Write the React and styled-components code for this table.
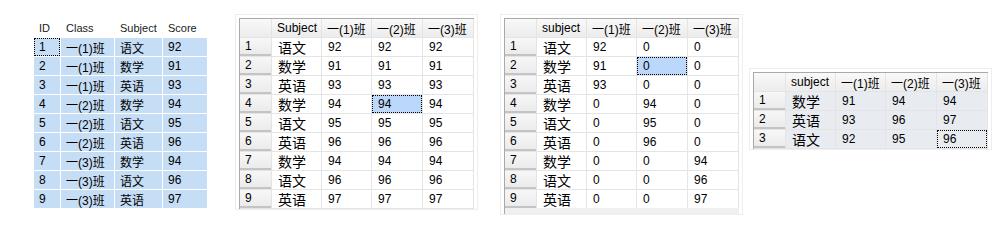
import React from "react"
import styled, { createGlobalStyle, css } from "styled-components"

const Global = createGlobalStyle`
  body {
    margin: 0;
    background: #ffffff;
    font-family: "Liberation Sans", "Noto Sans CJK SC", sans-serif;
    font-size: 12px;
    color: #000;
  }
`

const Page = styled.div`
  display: flex;
  align-items: flex-start;
  width: 1004px;
  height: 242px;
  padding: 14px 0 0 34px;
  box-sizing: border-box;
`

/* first table: all rows selected, light blue */
const SelGrid = styled.div`
  display: grid;
  grid-template-columns: 26px 53px 47px 44px;
  grid-template-rows: 19px;
  grid-auto-rows: 18px;
  row-gap: 1px;
  column-gap: 1px;
  margin-top: 4px;
  background: #ffffff;
`

const SelHead = styled.div`
  display: flex;
  align-items: center;
  padding-left: 5px;
  font-size: 11px;
  color: #1a1a1a;
`

const SelCell = styled.div`
  display: flex;
  align-items: center;
  padding-left: 5px;
  background: #c6ddf6;
  box-sizing: border-box;
  ${p => p.$focus && css`
    outline: 1px dotted #000;
    outline-offset: -1px;
  `}
`

/* result grids */
const Frame = styled.div`
  margin-left: ${p => p.$left}px;
  margin-top: ${p => p.$top || 0}px;
  padding: 3px 3px 0 3px;
  border: 1px solid #eeeeee;
  background: #ffffff;
`

const Grid = styled.div`
  display: grid;
  grid-template-columns: 31px 49px 49px 50px 50px;
  grid-auto-rows: 18px;
  gap: 1px;
  border-top: 1px solid #a9a9a9;
  border-left: 1px solid #a9a9a9;
  background: #e4e4e4;
  padding-right: 1px;
  padding-bottom: ${p => p.$tail || 1}px;
  ${p => p.$tail && css`
    background: linear-gradient(#e4e4e4, #e4e4e4) top/100% calc(100% - ${p.$tail}px) no-repeat, #f0f0f0;
  `}
`

const Head = styled.div`
  display: flex;
  align-items: center;
  padding-left: 5px;
  background: linear-gradient(#f9f9f9, #ececec);
  font-size: 12px;
  white-space: nowrap;
`

const RowHead = styled.div`
  display: flex;
  align-items: center;
  padding-left: 5px;
  background: linear-gradient(#f7f7f7, #ebebeb);
  border-bottom: 2px solid #c4c4c4;
  box-sizing: border-box;
`

const Cell = styled.div`
  display: flex;
  align-items: center;
  padding-left: 6px;
  background: ${p => (p.$sel ? "#bbd8fb" : p.$tint ? "#e8ecf1" : "#ffffff")};
  box-sizing: border-box;
  font-size: ${p => (p.$zh ? "14px" : "12px")};
  ${p => p.$focus && css`
    outline: 1px dotted #000;
    outline-offset: -1px;
  `}
`

const source = [
  ["1", "一(1)班", "语文", "92"],
  ["2", "一(1)班", "数学", "91"],
  ["3", "一(1)班", "英语", "93"],
  ["4", "一(2)班", "数学", "94"],
  ["5", "一(2)班", "语文", "95"],
  ["6", "一(2)班", "英语", "96"],
  ["7", "一(3)班", "数学", "94"],
  ["8", "一(3)班", "语文", "96"],
  ["9", "一(3)班", "英语", "97"],
]

const wide = [
  ["语文", "92", "92", "92"],
  ["数学", "91", "91", "91"],
  ["英语", "93", "93", "93"],
  ["数学", "94", "94", "94"],
  ["语文", "95", "95", "95"],
  ["英语", "96", "96", "96"],
  ["数学", "94", "94", "94"],
  ["语文", "96", "96", "96"],
  ["英语", "97", "97", "97"],
]

const sparse = [
  ["语文", "92", "0", "0"],
  ["数学", "91", "0", "0"],
  ["英语", "93", "0", "0"],
  ["数学", "0", "94", "0"],
  ["语文", "0", "95", "0"],
  ["英语", "0", "96", "0"],
  ["数学", "0", "0", "94"],
  ["语文", "0", "0", "96"],
  ["英语", "0", "0", "97"],
]

const summary = [
  ["数学", "91", "94", "94"],
  ["英语", "93", "96", "97"],
  ["语文", "92", "95", "96"],
]

const classes = ["一(1)班", "一(2)班", "一(3)班"]

const ResultGrid = ({ label, rows, focus, tint, tail }) => (
  <Grid $tail={tail}>
    <Head />
    <Head>{label}</Head>
    {classes.map(c => <Head key={c}>{c}</Head>)}
    {rows.map((row, r) => (
      <React.Fragment key={r}>
        <RowHead>{r + 1}</RowHead>
        {row.map((v, c) => {
          const hit = focus && focus[0] === r && focus[1] === c
          return (
            <Cell key={c} $zh={c === 0} $tint={tint}
              $sel={hit && focus[2]} $focus={hit}>
              {v}
            </Cell>
          )
        })}
      </React.Fragment>
    ))}
  </Grid>
)

export default function App() {
  return (
    <>
      <Global />
      <Page>
        <SelGrid>
          {["ID", "Class", "Subject", "Score"].map(h => <SelHead key={h}>{h}</SelHead>)}
          {source.map((row, r) =>
            row.map((v, c) => (
              <SelCell key={r + "-" + c} $focus={r === 0 && c === 0}>{v}</SelCell>
            ))
          )}
        </SelGrid>

        <Frame $left={28}>
          <ResultGrid label="Subject" rows={wide} focus={[3, 2, true]} />
        </Frame>

        <Frame $left={22}>
          <ResultGrid label="subject" rows={sparse} focus={[1, 2, true]} tail={6} />
        </Frame>

        <Frame $left={6} $top={54}>
          <ResultGrid label="subject" rows={summary} focus={[2, 3, false]} tint />
        </Frame>
      </Page>
    </>
  )
}
